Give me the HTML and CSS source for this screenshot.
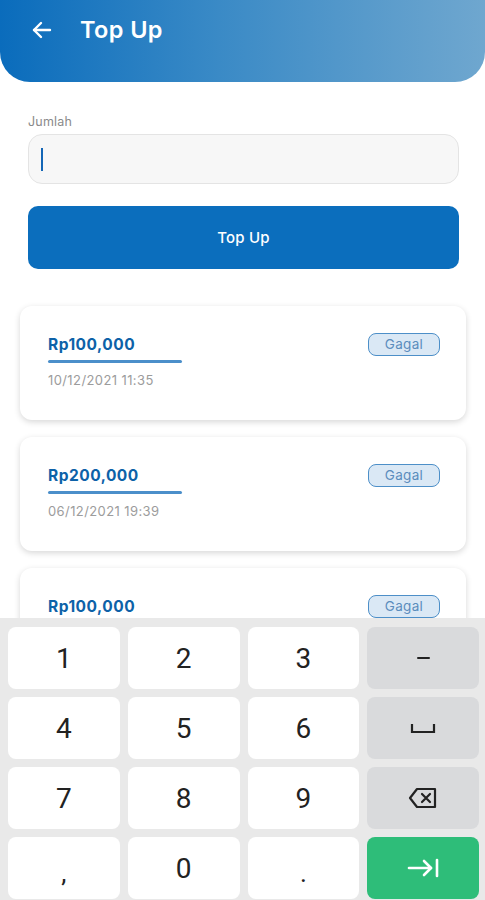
FILE: index.html
```html
<!DOCTYPE html>
<html lang="id">
<head>
    <meta charset="UTF-8">
    <meta name="viewport" content="width=device-width, initial-scale=1.0">
    <title>Top Up</title>
    <link rel="stylesheet" href="styles.css">
</head>
<body>
    <div class="header">
        <svg class="back" width="24" height="24" viewBox="0 0 24 24" fill="none" stroke="#fff" stroke-width="2.4" stroke-linecap="round" stroke-linejoin="round">
            <path d="M20 12H4"/>
            <path d="M11 5l-7 7 7 7"/>
        </svg>
        <h1>Top Up</h1>
    </div>

    <div class="form">
        <label class="label">Jumlah</label>
        <div class="input"><span class="cursor"></span></div>
        <button class="btn">Top Up</button>
    </div>

    <div class="list">
        <div class="card">
            <div class="info">
                <div class="amount">Rp100,000</div>
                <div class="bar"></div>
                <div class="date">10/12/2021 11:35</div>
            </div>
            <span class="badge">Gagal</span>
        </div>
        <div class="card">
            <div class="info">
                <div class="amount">Rp200,000</div>
                <div class="bar"></div>
                <div class="date">06/12/2021 19:39</div>
            </div>
            <span class="badge">Gagal</span>
        </div>
        <div class="card">
            <div class="info">
                <div class="amount">Rp100,000</div>
                <div class="bar"></div>
            </div>
            <span class="badge">Gagal</span>
        </div>
    </div>

    <div class="keyboard">
        <div class="key">1</div>
        <div class="key">2</div>
        <div class="key">3</div>
        <div class="key fn"><span class="dash"></span></div>
        <div class="key">4</div>
        <div class="key">5</div>
        <div class="key">6</div>
        <div class="key fn">
            <svg width="26" height="12" viewBox="0 0 26 12" fill="none" stroke="#222" stroke-width="2.2">
                <path d="M2 2v8h22V2"/>
            </svg>
        </div>
        <div class="key">7</div>
        <div class="key">8</div>
        <div class="key">9</div>
        <div class="key fn">
            <svg width="30" height="22" viewBox="0 0 30 22" fill="none" stroke="#222" stroke-width="2.2" stroke-linejoin="round" stroke-linecap="round">
                <path d="M9 2h18v18H9L2 11z"/>
                <path d="M14 7l8 8M22 7l-8 8"/>
            </svg>
        </div>
        <div class="key small">,</div>
        <div class="key">0</div>
        <div class="key small">.</div>
        <div class="key go">
            <svg width="32" height="20" viewBox="0 0 32 20" fill="none" stroke="#fff" stroke-width="2.6" stroke-linecap="round" stroke-linejoin="round">
                <path d="M2 10h22"/>
                <path d="M17 3l7 7-7 7"/>
                <path d="M30 2v16"/>
            </svg>
        </div>
    </div>
</body>
</html>
```

FILE: styles.css
```css
body {
    margin: 0;
    padding: 0;
    font-family: Inter, "Noto Sans", sans-serif;
    background: #ffffff;
    color: #222;
    height: 900px;
    overflow: hidden;
}

.header {
    height: 82px;
    box-sizing: border-box;
    padding: 12px 0 0 30px;
    display: flex;
    align-items: flex-start;
    gap: 26px;
    background: linear-gradient(to right, #0a6cbc, #3a8ac6 45%, #6fa7cf);
    border-radius: 0 0 30px 30px;
}

.back {
    margin-top: 6px;
}

.header h1 {
    margin: 0;
    color: #fff;
    font-size: 23.5px;
    font-weight: 600;
    letter-spacing: 0.4px;
    line-height: 36px;
}

.form {
    padding: 0 26px 0 28px;
    display: flex;
    flex-direction: column;
}

.label {
    margin-top: 32px;
    font-size: 12.5px;
    color: #8a8a8a;
    line-height: 16px;
    letter-spacing: 0.2px;
}

.input {
    margin-top: 4px;
    height: 50px;
    box-sizing: border-box;
    border: 1px solid #e4e4e4;
    border-radius: 14px;
    background: #f7f7f7;
    display: flex;
    align-items: center;
    padding-left: 12px;
}

.cursor {
    width: 2px;
    height: 23px;
    background: #1466b6;
}

.btn {
    margin-top: 22px;
    height: 63px;
    border: none;
    border-radius: 10px;
    background: #0b6ebd;
    color: #fff;
    font-family: Inter, "Noto Sans", sans-serif;
    font-size: 15px;
    font-weight: 500;
    letter-spacing: 0.2px;
}

.list {
    padding: 37px 19px 0 20px;
    display: flex;
    flex-direction: column;
    gap: 17px;
}

.card {
    height: 114px;
    box-sizing: border-box;
    padding: 27px 26px 0 28px;
    background: #fff;
    border-radius: 12px;
    box-shadow: 0 2px 6px rgba(0, 0, 0, 0.16);
    display: flex;
    justify-content: space-between;
    align-items: flex-start;
}

.amount {
    font-size: 15.5px;
    font-weight: 700;
    color: #0d62a8;
    line-height: 24px;
    letter-spacing: 0.5px;
}

.bar {
    width: 134px;
    height: 3px;
    margin-top: 3px;
    border-radius: 2px;
    background: #4b8fca;
}

.date {
    margin-top: 9px;
    font-size: 13px;
    color: #9c9c9c;
    letter-spacing: 0.4px;
}

.badge {
    width: 72px;
    height: 23px;
    box-sizing: border-box;
    border: 1.5px solid #4d8fc8;
    border-radius: 8px;
    background: #dae8f5;
    color: #5a8dbd;
    font-size: 13.5px;
    text-align: center;
    line-height: 20px;
    letter-spacing: 0.3px;
}

.keyboard {
    position: fixed;
    left: 0;
    right: 0;
    top: 618px;
    bottom: 0;
    box-sizing: border-box;
    padding: 9px 6px 0 8px;
    background: #e9e9e9;
    display: grid;
    grid-template-columns: repeat(4, 1fr);
    grid-auto-rows: 62px;
    column-gap: 8px;
    row-gap: 8px;
    overflow: hidden;
}

.key {
    background: #fff;
    border-radius: 8px;
    display: flex;
    justify-content: center;
    align-items: center;
    font-family: Roboto, sans-serif;
    font-size: 28px;
    color: #222;
}

.key.small {
    font-size: 26px;
    padding-top: 10px;
}

.key.fn {
    background: #d9dadc;
}

.key.go {
    background: #2ebd79;
}

.dash {
    width: 13px;
    height: 2.5px;
    background: #222;
    border-radius: 1px;
}
```
